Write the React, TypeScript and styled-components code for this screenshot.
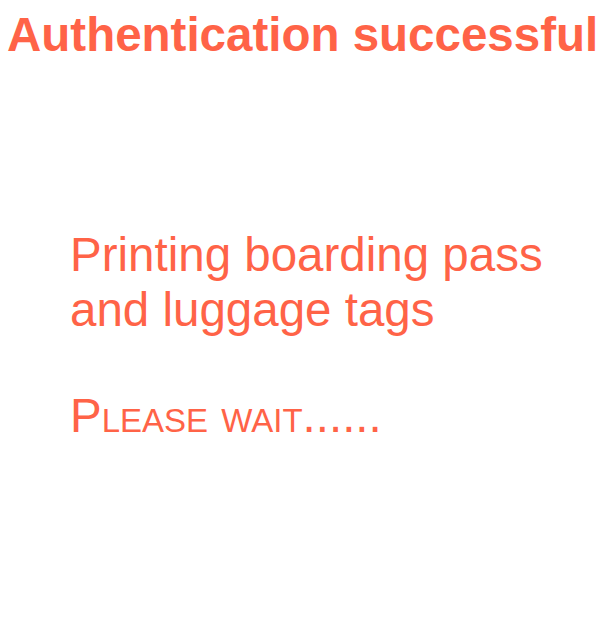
import styled, { createGlobalStyle } from 'styled-components';

const GlobalStyle = createGlobalStyle`
  html, body {
    margin: 0;
    padding: 0;
    background: #ffffff;
  }
  body {
    font-family: "Liberation Sans", Arial, sans-serif;
  }
`;

const Page = styled.div`
  display: flex;
  flex-direction: column;
  padding: 7px 7px 0 7px;
  color: #ff6347;
`;

const Title = styled.h1`
  margin: 0;
  font-size: 47.5px;
  font-weight: 700;
  line-height: normal;
  white-space: nowrap;
`;

const Message = styled.div`
  display: flex;
  flex-direction: column;
  gap: 51px;
  margin-top: 165px;
  padding-left: 63px;
`;

const Text = styled.p<{ $smallCaps?: boolean }>`
  margin: 0;
  font-size: 47.5px;
  font-weight: 400;
  line-height: normal;
  font-variant: ${(p) => (p.$smallCaps ? 'small-caps' : 'normal')};
`;

function App() {
  return (
    <>
      <GlobalStyle />
      <Page>
        <Title>Authentication successful</Title>
        <Message>
          <Text>
            Printing boarding pass
            <br />
            and luggage tags
          </Text>
          <Text $smallCaps>Please wait......</Text>
        </Message>
      </Page>
    </>
  );
}

export default App;
